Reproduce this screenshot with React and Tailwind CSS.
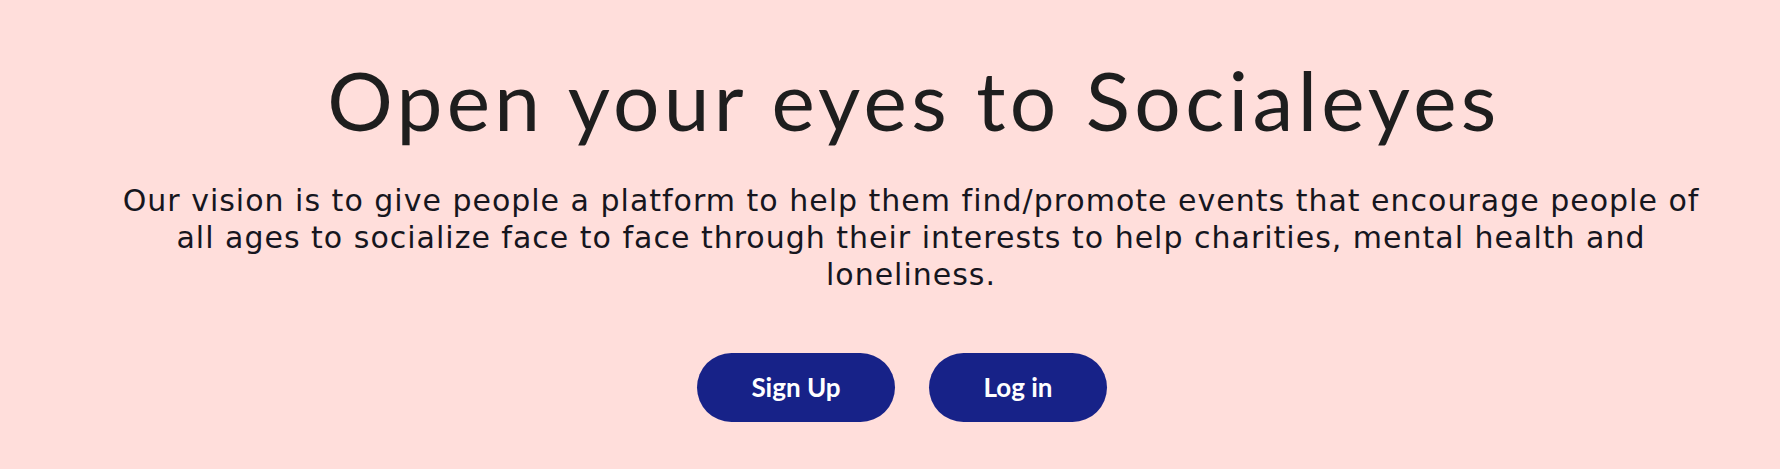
import React from 'react';

export default function App() {
  return (
    <div className="min-h-[469px] w-full bg-[#ffdedb] flex flex-col items-center pl-[42px] pt-[58px]">
      {/* Hero */}
      <h1 className="ml-[6px] text-[82px] leading-none text-[#1e1e1e] tracking-[4.3px] font-['Lato',sans-serif]">
        Open your eyes to Socialeyes
      </h1>

      <p className="mt-[42px] max-w-[1620px] text-center text-[30px] leading-[37px] tracking-[1px] text-[#16161e] font-['DejaVu_Sans',sans-serif]">
        Our vision is to give people a platform to help them find/promote events that encourage people of all ages to socialize face to face through their interests to help charities, mental health and loneliness.
      </p>

      {/* Actions */}
      <div className="mt-[60px] mr-[18px] flex items-center gap-[34px]">
        <button className="w-[198px] h-[69px] rounded-full bg-[#172288] text-white text-[26px] font-bold font-['Lato',sans-serif]">
          Sign Up
        </button>
        <button className="w-[178px] h-[69px] rounded-full bg-[#172288] text-white text-[26px] font-bold font-['Lato',sans-serif]">
          Log in
        </button>
      </div>
    </div>
  );
}
